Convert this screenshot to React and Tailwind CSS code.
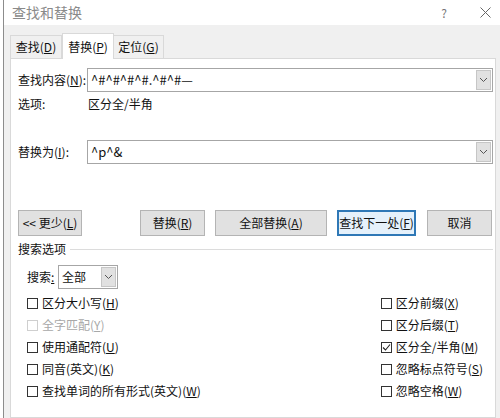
import React from 'react';

const font = { fontFamily: '"Noto Sans CJK SC", "Noto Sans", sans-serif' };

// small chevron used in the dropdown buttons
const Chevron = () => (
  <svg width="9" height="6" viewBox="0 0 9 6">
    <path d="M1 1 L4.5 4.5 L8 1" fill="none" stroke="#555" strokeWidth="1" />
  </svg>
);

const Combo = ({ value }) => (
  <div className="flex-1 h-[24px] flex border border-[#a6a6a6] bg-white">
    <div className="flex-1 flex items-center pl-[3px] text-[13px] text-[#111]">{value}</div>
    <div className="w-[15px] m-[1px] flex items-center justify-center bg-[#e1e1e1] border border-[#c6c6c6]">
      <Chevron />
    </div>
  </div>
);

const Btn = ({ children, w, focused }) => (
  <div
    className={
      focused
        ? `h-[26px] ${w} flex items-center justify-center border-2 border-[#2f78b6] bg-[#e5f1fb] text-[12px] text-[#111]`
        : `h-[26px] ${w} flex items-center justify-center border border-[#b4b4b4] bg-[#e1e1e1] text-[12px] text-[#111]`
    }
  >
    {children}
  </div>
);

const Check = ({ label, k, checked, disabled }) => (
  <div className="h-[22px] flex items-center gap-[4px]">
    <div
      className={
        disabled
          ? 'w-[11px] h-[11px] border border-[#cfcfcf] bg-white'
          : 'w-[11px] h-[11px] border border-[#333] bg-white flex items-center justify-center'
      }
    >
      {checked && (
        <svg width="9" height="9" viewBox="0 0 9 9">
          <path d="M1 4.5 L3.5 7 L8 1.5" fill="none" stroke="#222" strokeWidth="1.1" />
        </svg>
      )}
    </div>
    <span className={disabled ? 'text-[12px] text-[#a8a8a8]' : 'text-[12px] text-[#111]'}>
      {label}(<span className="underline">{k}</span>)
    </span>
  </div>
);

export default function App() {
  return (
    <div className="w-[500px] h-[418px] overflow-hidden bg-white flex" style={font}>
      {/* document behind the dialog */}
      <div className="w-[3px] bg-white" />
      <div className="flex-1 flex flex-col border-l border-[#8c8c8c]">
        {/* title bar */}
        <div className="h-[25px] bg-white flex items-center pl-[8px] pr-[9px]">
          <span className="text-[14px] text-[#8a8a8a] flex-1">查找和替换</span>
          <span className="text-[12px] text-[#777] mr-[33px]">?</span>
          <svg width="11" height="11" viewBox="0 0 11 11">
            <path d="M0.5 0.5 L10.5 10.5 M10.5 0.5 L0.5 10.5" stroke="#666" strokeWidth="1" />
          </svg>
        </div>

        <div className="flex-1 bg-[#f0f0f0] pl-[6px] pr-[4px] pt-[7px] flex flex-col">
          {/* tabs */}
          <div className="flex items-end h-[26px]">
            <div className="h-[23px] w-[52px] flex items-center justify-center border border-b-0 border-[#d9d9d9] bg-[#f0f0f0] text-[12px] text-[#111]">
              查找(<span className="underline">D</span>)
            </div>
            <div className="h-[26px] w-[52px] flex items-center justify-center border border-b-0 border-[#d9d9d9] bg-white text-[12px] text-[#111] relative top-[1px]">
              替换(<span className="underline">P</span>)
            </div>
            <div className="h-[23px] w-[50px] flex items-center justify-center border border-b-0 border-l-0 border-[#d9d9d9] bg-[#f0f0f0] text-[12px] text-[#111]">
              定位(<span className="underline">G</span>)
            </div>
          </div>

          {/* panel */}
          <div className="flex-1 bg-white border border-[#d9d9d9] pl-[7px] pr-[2px] pt-[9px] flex flex-col">
            <div className="flex items-center">
              <span className="w-[69px] text-[12px] text-[#111]">
                查找内容(<span className="underline">N</span>):
              </span>
              <Combo value="^#^#^#^#.^#^#—" />
            </div>
            <div className="flex items-center h-[18px] mt-[3px]">
              <span className="w-[70px] text-[12px] text-[#111]">选项:</span>
              <span className="text-[12px] text-[#111]">区分全/半角</span>
            </div>
            <div className="flex items-center mt-[27px]">
              <span className="w-[69px] text-[12px] text-[#111]">
                替换为(<span className="underline">I</span>):
              </span>
              <Combo value="^p^&" />
            </div>

            {/* buttons */}
            <div className="flex items-center mt-[46px]">
              <Btn w="w-[64px]">
                &lt;&lt; 更少(<span className="underline">L</span>)
              </Btn>
              <div className="w-[58px]" />
              <Btn w="w-[65px]">
                替换(<span className="underline">R</span>)
              </Btn>
              <div className="w-[10px]" />
              <Btn w="w-[112px]">
                全部替换(<span className="underline">A</span>)
              </Btn>
              <div className="w-[10px]" />
              <Btn w="w-[79px]" focused>
                查找下一处(<span className="underline">F</span>)
              </Btn>
              <div className="w-[11px]" />
              <Btn w="w-[65px]">取消</Btn>
            </div>

            {/* search options */}
            <div className="flex items-center mt-[3px] h-[20px]">
              <span className="text-[12px] text-[#111] mr-[4px]">搜索选项</span>
              <div className="flex-1 h-px bg-[#dcdcdc]" />
            </div>
            <div className="flex items-center pl-[9px] mt-[6px]">
              <span className="text-[12px] text-[#111] w-[31px]">
                搜索<span className="underline">:</span>
              </span>
              <div className="w-[60px] flex">
                <Combo value={<span className="text-[12px]">全部</span>} />
              </div>
            </div>

            <div className="flex justify-between pl-[9px] pr-[10px] mt-[3px]">
              <div className="flex flex-col">
                <Check label="区分大小写" k="H" />
                <Check label="全字匹配" k="Y" disabled />
                <Check label="使用通配符" k="U" />
                <Check label="同音(英文)" k="K" />
                <Check label="查找单词的所有形式(英文)" k="W" />
              </div>
              <div className="flex flex-col">
                <Check label="区分前缀" k="X" />
                <Check label="区分后缀" k="T" />
                <Check label="区分全/半角" k="M" checked />
                <Check label="忽略标点符号" k="S" />
                <Check label="忽略空格" k="W" />
              </div>
            </div>
          </div>
        </div>
      </div>
    </div>
  );
}
